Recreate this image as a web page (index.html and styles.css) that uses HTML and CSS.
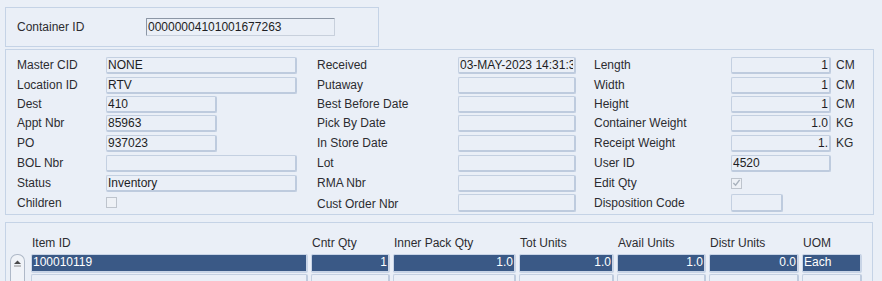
FILE: index.html
```html
<!DOCTYPE html>
<html lang="en">

<head>
    <meta charset="UTF-8">
    <meta name="viewport" content="width=device-width, initial-scale=1.0">
    <title>Container Inquiry</title>
    <link rel="stylesheet" href="styles.css">
</head>

<body>
    <div class="panel panel-head">
        <label class="lbl head-lbl">Container ID</label>
        <input class="fld fld-key" type="text" value="00000004101001677263" readonly>
    </div>

    <div class="panel panel-detail">
        <div class="col col-one">
            <span class="lbl">Master CID</span><input class="fld w-long" value="NONE" readonly>
            <span class="lbl">Location ID</span><input class="fld w-long" value="RTV" readonly>
            <span class="lbl">Dest</span><input class="fld w-short" value="410" readonly>
            <span class="lbl">Appt Nbr</span><input class="fld w-short" value="85963" readonly>
            <span class="lbl">PO</span><input class="fld w-short" value="937023" readonly>
            <span class="lbl">BOL Nbr</span><input class="fld w-long" value="" readonly>
            <span class="lbl">Status</span><input class="fld w-long" value="Inventory" readonly>
            <span class="lbl">Children</span><span class="chk"></span>
        </div>
        <div class="col col-two">
            <span class="lbl">Received</span><input class="fld" value="03-MAY-2023 14:31:37" readonly>
            <span class="lbl">Putaway</span><input class="fld" value="" readonly>
            <span class="lbl">Best Before Date</span><input class="fld" value="" readonly>
            <span class="lbl">Pick By Date</span><input class="fld" value="" readonly>
            <span class="lbl">In Store Date</span><input class="fld" value="" readonly>
            <span class="lbl">Lot</span><input class="fld" value="" readonly>
            <span class="lbl">RMA Nbr</span><input class="fld" value="" readonly>
            <span class="lbl">Cust Order Nbr</span><input class="fld" value="" readonly>
        </div>
        <div class="col col-three">
            <span class="lbl">Length</span><input class="fld num" value="1" readonly><span class="unit">CM</span>
            <span class="lbl">Width</span><input class="fld num" value="1" readonly><span class="unit">CM</span>
            <span class="lbl">Height</span><input class="fld num" value="1" readonly><span class="unit">CM</span>
            <span class="lbl">Container Weight</span><input class="fld num" value="1.0" readonly><span class="unit">KG</span>
            <span class="lbl">Receipt Weight</span><input class="fld num" value="1." readonly><span class="unit">KG</span>
            <span class="lbl">User ID</span><input class="fld" value="4520" readonly><span class="unit"></span>
            <span class="lbl">Edit Qty</span><span class="chk checked">
                <svg width="10" height="10" viewBox="0 0 10 10"><path d="M1.5 5 L4 7.5 L8.5 1.5" fill="none" stroke="#a9b2bd" stroke-width="1.6"/></svg>
            </span><span class="unit"></span>
            <span class="lbl">Disposition Code</span><input class="fld w-tiny" value="" readonly><span class="unit"></span>
        </div>
    </div>

    <div class="panel panel-grid">
        <div class="grid">
            <span></span>
            <span class="th">Item ID</span>
            <span class="th">Cntr Qty</span>
            <span class="th">Inner Pack Qty</span>
            <span class="th">Tot Units</span>
            <span class="th">Avail Units</span>
            <span class="th">Distr Units</span>
            <span class="th">UOM</span>

            <div class="scroll">
                <div class="scroll-btn">
                    <svg width="13" height="8" viewBox="0 0 13 8"><path d="M3 5 L6.5 1.5 L10 5 Z" fill="#4a4a4a"/><path d="M3 7 H10" stroke="#8a8a8a" stroke-width="1"/></svg>
                </div>
            </div>
            <span class="td sel">100010119</span>
            <span class="td sel num">1</span>
            <span class="td sel num">1.0</span>
            <span class="td sel num">1.0</span>
            <span class="td sel num">1.0</span>
            <span class="td sel num">0.0</span>
            <span class="td sel">Each</span>

            <span class="td"></span>
            <span class="td"></span>
            <span class="td"></span>
            <span class="td"></span>
            <span class="td"></span>
            <span class="td"></span>
            <span class="td"></span>
        </div>
    </div>
</body>

</html>
```

FILE: styles.css
```css
* {
    margin: 0;
    padding: 0;
    box-sizing: border-box;
}
body {
    background-color: rgb(234, 239, 247);
    font-family: 'Liberation Sans', Arial, sans-serif;
    font-size: 12px;
    color: rgb(44, 44, 48);
    overflow: hidden;
    height: 281px;
}
.panel {
    border: 1px solid rgb(197, 211, 230);
    margin-left: 5px;
}
.lbl {
    white-space: nowrap;
}
.fld {
    font-family: inherit;
    font-size: 12px;
    color: rgb(30, 30, 36);
    background: rgb(234, 239, 247);
    border: 1px solid rgb(196, 208, 225);
    border-right: 2px solid rgb(190, 203, 222);
    border-bottom: 2px solid rgb(190, 203, 222);
    border-radius: 2px;
    height: 17px;
    padding: 0 1px;
    outline: none;
    width: 100%;
}
.fld.num {
    text-align: right;
}

/* header panel */
.panel-head {
    margin-top: 7px;
    width: 374px;
    height: 40px;
    display: flex;
    align-items: center;
    padding-left: 11px;
}
.head-lbl {
    width: 129px;
}
.fld-key {
    width: 189px;
    height: 18px;
    border: 1px solid rgb(200, 208, 220);
    border-top-color: rgb(140, 150, 165);
    border-left-color: rgb(140, 150, 165);
    border-radius: 1px;
}

/* detail panel */
.panel-detail {
    margin-top: 2px;
    width: 869px;
    height: 166px;
    padding: 5px 0 0 11px;
    display: grid;
    grid-template-columns: 300px 277px 280px;
}
.col {
    display: grid;
    grid-template-rows: 20px 20px 18px 20px 20px 20px 20px 19px;
    align-items: center;
}
.col-one {
    grid-template-columns: 89px 191px;
}
.col-one .w-short {
    width: 111px;
}
.col-two {
    grid-template-columns: 141px 118px;
}
.col-three {
    grid-template-columns: 137px 100px 40px;
}
.col-three .w-tiny {
    width: 52px;
    height: 18px;
}
.col-two .lbl:last-of-type,
.col-three .lbl:last-of-type {
    align-self: end;
    padding-bottom: 1px;
}
.col-two .fld:last-of-type {
    height: 18px;
}
.unit {
    padding-left: 5px;
}
.chk {
    width: 11px;
    height: 11px;
    border: 1px solid rgb(190, 196, 205);
    background: rgb(238, 241, 246);
    display: flex;
    align-items: center;
    justify-content: center;
}

/* item grid */
.panel-grid {
    margin-top: 7px;
    width: 868px;
    height: 60px;
    padding: 11px 0 0 4px;
    overflow: hidden;
}
.grid {
    display: grid;
    grid-template-columns: 18px 277px 79px 123px 95px 89px 90px 60px;
    grid-template-rows: 19px 19px 19px;
    column-gap: 3px;
    row-gap: 1px;
}
.th {
    padding-left: 1px;
    line-height: 19px;
    white-space: nowrap;
}
.td {
    border: 1px solid rgb(196, 208, 225);
    border-right: 2px solid rgb(190, 203, 222);
    border-bottom: 2px solid rgb(190, 203, 222);
    border-radius: 2px;
    padding: 0 1px;
    line-height: 15px;
    height: 19px;
    white-space: nowrap;
    overflow: hidden;
}
.td.num {
    text-align: right;
}
.td.sel {
    background: rgb(58, 89, 134);
    color: #fff;
    border-color: rgb(200, 212, 230);
}
.scroll {
    grid-row: 2 / span 2;
    grid-column: 1;
}
.scroll-btn {
    width: 15px;
    height: 40px;
    border: 1px solid rgb(175, 185, 200);
    border-bottom: none;
    border-radius: 7px 7px 0 0;
    background: rgb(240, 243, 248);
    display: flex;
    justify-content: center;
    padding-top: 4px;
}
```
